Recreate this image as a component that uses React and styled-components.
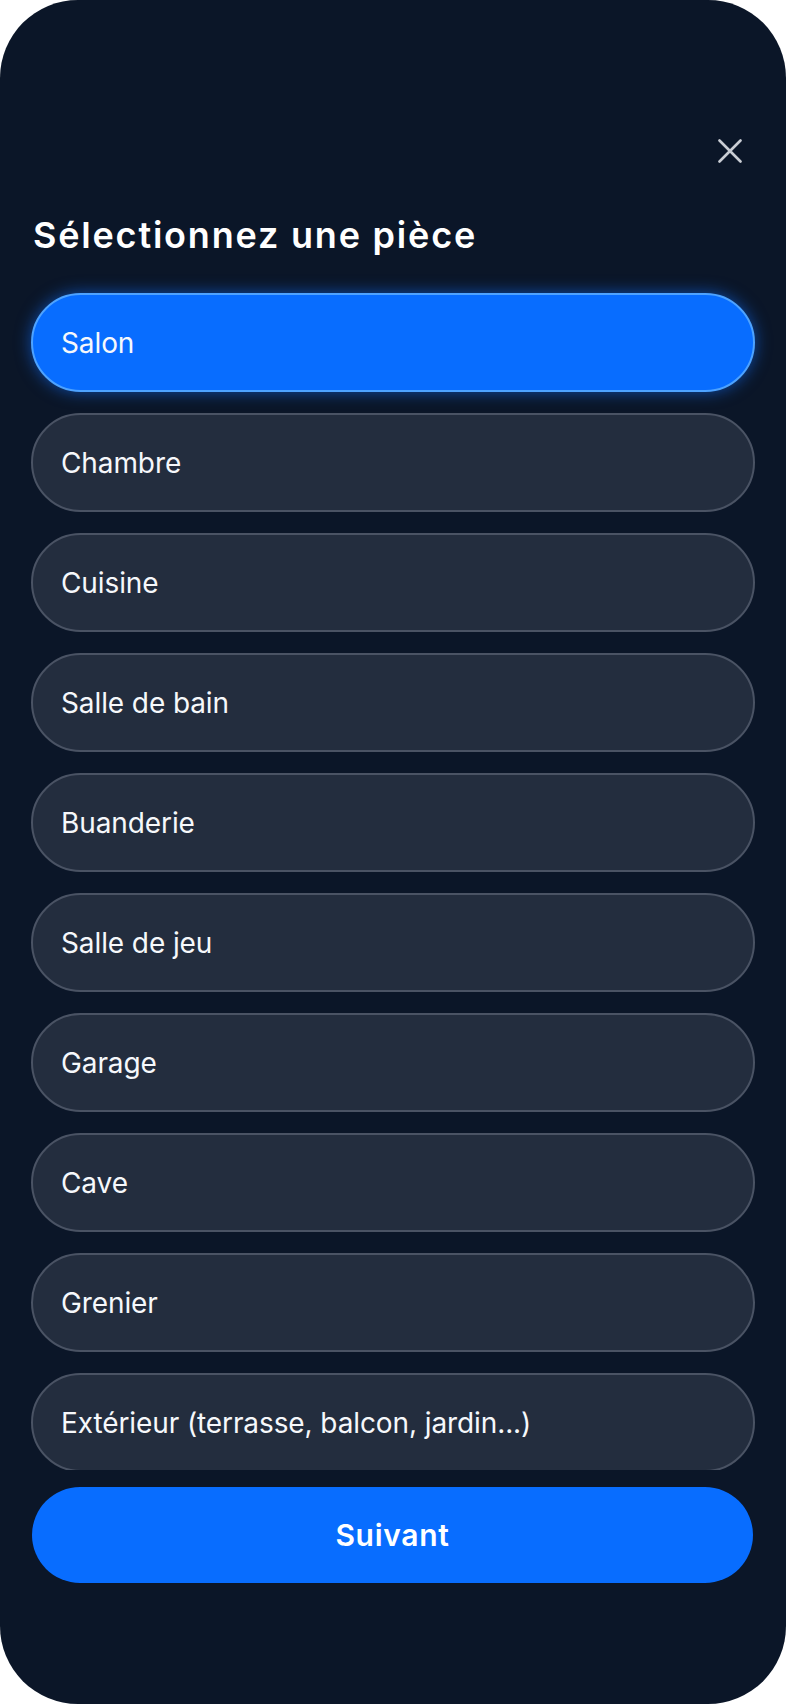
import { useState } from "react";
import styled, { createGlobalStyle } from "styled-components";

const GlobalStyle = createGlobalStyle`
  * { box-sizing: border-box; }
  body {
    margin: 0;
    background: #ffffff;
    font-family: Inter, "Noto Sans", "Liberation Sans", sans-serif;
  }
`;

const Frame = styled.div`
  width: 786px;
  height: 1704px;
  border-radius: 78px;
  background: #0b1628;
  display: flex;
  flex-direction: column;
  padding: 0 31px 0 31px;
  overflow: hidden;
`;

const CloseRow = styled.div`
  display: flex;
  justify-content: flex-end;
  margin-top: 139px;
  padding-right: 13px;
`;

const CloseButton = styled.button`
  width: 24px;
  height: 24px;
  padding: 0;
  border: none;
  background: transparent;
  color: #c9cdd4;
  cursor: pointer;
  display: flex;
`;

const Title = styled.h1`
  margin: 50px 0 0 2px;
  font-size: 36px;
  line-height: 44px;
  font-weight: 600;
  letter-spacing: 1.8px;
  color: #ffffff;
`;

const List = styled.div`
  margin: 16px -31px 0;
  padding: 20px 31px 0;
  height: 1197px;
  display: flex;
  flex-direction: column;
  gap: 21px;
  overflow-y: auto;
  scrollbar-width: none;
`;

const Option = styled.button`
  flex: 0 0 99px;
  height: 99px;
  width: 100%;
  border-radius: 50px;
  padding: 0 28px;
  display: flex;
  align-items: center;
  text-align: left;
  font-family: inherit;
  font-size: 28px;
  font-weight: 400;
  letter-spacing: -0.1px;
  color: #f6f8fb;
  cursor: pointer;
  border: 2px solid ${(p) => (p.$active ? "#4ea3ff" : "#4a5364")};
  background: ${(p) => (p.$active ? "#086dff" : "#232d3e")};
  box-shadow: ${(p) => (p.$active ? "0 0 16px rgba(16, 112, 255, 0.6)" : "none")};
`;

const NextButton = styled.button`
  margin: 17px 2px 0 1px;
  height: 96px;
  border: none;
  border-radius: 48px;
  background: #086dff;
  color: #ffffff;
  font-family: inherit;
  font-size: 30px;
  font-weight: 600;
  letter-spacing: 0.7px;
  cursor: pointer;
`;

const rooms = [
  "Salon",
  "Chambre",
  "Cuisine",
  "Salle de bain",
  "Buanderie",
  "Salle de jeu",
  "Garage",
  "Cave",
  "Grenier",
  "Extérieur (terrasse, balcon, jardin...)",
];

export default function App() {
  const [selected, setSelected] = useState("Salon");

  return (
    <>
      <GlobalStyle />
      <Frame>
        <CloseRow>
          <CloseButton aria-label="Fermer">
            <svg width="24" height="24" viewBox="0 0 24 24" fill="none">
              <path
                d="M1.5 1.5L22.5 22.5M22.5 1.5L1.5 22.5"
                stroke="currentColor"
                strokeWidth="2.6"
                strokeLinecap="round"
              />
            </svg>
          </CloseButton>
        </CloseRow>
        <Title>Sélectionnez une pièce</Title>
        <List>
          {rooms.map((room) => (
            <Option
              key={room}
              $active={selected === room}
              onClick={() => setSelected(room)}
            >
              {room}
            </Option>
          ))}
        </List>
        <NextButton>Suivant</NextButton>
      </Frame>
    </>
  );
}
